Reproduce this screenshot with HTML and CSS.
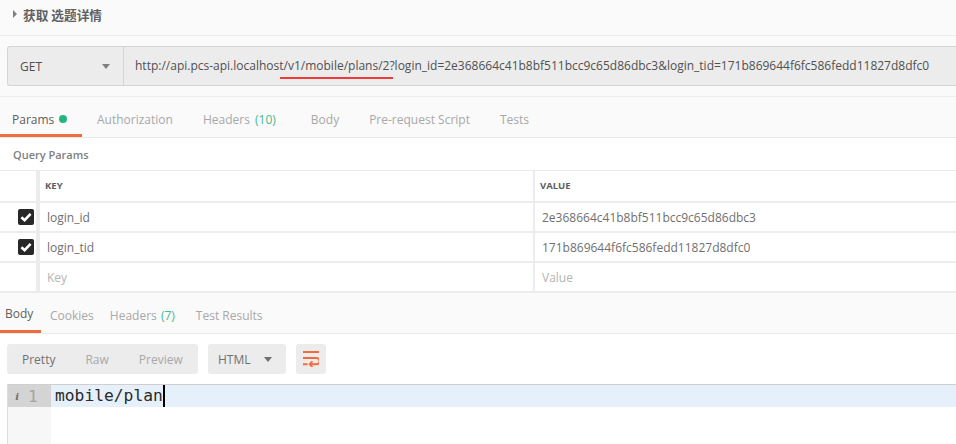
FILE: index.html
```html
<!DOCTYPE html>
<html lang="zh">
<head>
<meta charset="utf-8">
<title>获取选题详情</title>
<link rel="stylesheet" href="styles.css">
</head>
<body>
<header class="title-bar">
  <span class="caret-right"></span>
  <span class="title">获取 选题详情</span>
</header>
<section class="request-bar">
  <div class="request-box">
    <div class="method"><span>GET</span><span class="caret-down"></span></div>
    <div class="url">http://api.pcs-api.localhost/v1/mobile/plans/2?login_id=2e368664c41b8bf511bcc9c65d86dbc3&amp;login_tid=171b869644f6fc586fedd11827d8dfc0</div>
  </div>
  <span class="red-mark"></span>
</section>
<nav class="tabs req-tabs">
  <span class="tab active">Params<i class="dot"></i></span>
  <span class="tab">Authorization</span>
  <span class="tab tab-wide">Headers <em>(10)</em></span>
  <span class="tab">Body</span>
  <span class="tab">Pre-request Script</span>
  <span class="tab">Tests</span>
</nav>
<div class="section-label">Query Params</div>
<div class="grid">
  <div class="row head"><div class="c-check"></div><div class="c-key">KEY</div><div class="c-val">VALUE</div></div>
  <div class="row"><div class="c-check"><span class="check"><svg viewBox="0 0 16 16" width="16" height="16"><path d="M3.4 8.2 6.6 11.2 12.6 4.8" fill="none" stroke="#fff" stroke-width="2.6"/></svg></span></div><div class="c-key">login_id</div><div class="c-val">2e368664c41b8bf511bcc9c65d86dbc3</div></div>
  <div class="row"><div class="c-check"><span class="check"><svg viewBox="0 0 16 16" width="16" height="16"><path d="M3.4 8.2 6.6 11.2 12.6 4.8" fill="none" stroke="#fff" stroke-width="2.6"/></svg></span></div><div class="c-key">login_tid</div><div class="c-val">171b869644f6fc586fedd11827d8dfc0</div></div>
  <div class="row ph"><div class="c-check"></div><div class="c-key">Key</div><div class="c-val">Value</div></div>
</div>
<nav class="tabs res-tabs">
  <span class="tab active">Body</span>
  <span class="tab">Cookies</span>
  <span class="tab">Headers <em>(7)</em></span>
  <span class="tab">Test Results</span>
</nav>
<div class="toolbar">
  <div class="seg"><span class="seg-on">Pretty</span><span>Raw</span><span>Preview</span></div>
  <div class="lang"><span>HTML</span><span class="caret-down dark"></span></div>
  <div class="wrap-btn"><svg viewBox="0 0 16 16" width="16" height="16"><path d="M0 1H16M0 7H13.5a2.7 2.7 0 0 1 0 6.3H7.5M0 13.3H4.5" fill="none" stroke="#f26b3a" stroke-width="2"/><path d="M9.4 10.4 6.6 13.3l2.8 2.7" fill="none" stroke="#f26b3a" stroke-width="1.8"/></svg></div>
</div>
<div class="editor">
  <div class="gutter">
    <div class="gutter-line"><span class="info">i</span><span class="num">1</span></div>
  </div>
  <div class="code"><div class="code-line">mobile/plan<span class="cursor"></span></div></div>
</div>
</body>
</html>
```
FILE: styles.css
```css
* { box-sizing: border-box; }
html, body { margin: 0; padding: 0; height: 444px; overflow: hidden; background: #fff; }
body { font-family: "Open Sans", "Noto Sans CJK SC", sans-serif; font-size: 12px; color: #808080; width: 956px; }
.title-bar { height: 36px; background: #fafafa; border-bottom: 1px solid #eee; display: flex; align-items: center; padding-left: 13px; padding-bottom: 7px; gap: 6px; }
.caret-right { width: 0; height: 0; border-left: 4px solid #808080; border-top: 4px solid transparent; border-bottom: 4px solid transparent; }
.title { font-weight: 700; color: #606060; font-size: 12.7px; font-family: "Noto Sans CJK SC", sans-serif; }
.request-bar { position: relative; height: 61px; background: #fafafa; border-bottom: 1px solid #eee; padding: 10px 0 0 7px; }
.request-box { height: 40px; display: flex; background: #ececec; border: 1px solid #d4d4d4; border-width: 1px 0 1px 1px; border-radius: 3px 0 0 3px; }
.method { width: 116px; flex: none; border-right: 1px solid #d4d4d4; display: flex; align-items: center; justify-content: space-between; padding: 0 13px 0 12px; font-size: 12px; color: #505050; }
.caret-down { width: 0; height: 0; border-top: 5px solid #808080; border-left: 4px solid transparent; border-right: 4px solid transparent; }
.url { flex: 1; padding-left: 11px; line-height: 37px; color: #505050; white-space: nowrap; font-size: 12px; }
.red-mark { position: absolute; left: 280px; top: 41px; width: 113px; height: 2px; background: #f23a3a; }
.tabs { display: flex; background: #fafafa; border-bottom: 1px solid #eaeaea; }
.tab { display: flex; align-items: center; color: #a8a8a8; white-space: pre; }
.tab em { font-style: normal; color: #46b98c; margin-left: 1px; }
.tab.active { color: #606060; border-bottom: 3px solid #f26b3a; }
.req-tabs { height: 41px; }
.req-tabs .tab { padding: 5px 24px 0 0; height: 40px; margin-right: 6px; }
.req-tabs .tab-wide { padding-right: 29px; }
.req-tabs .tab-wide em { margin-left: 2px; }
.req-tabs .tab.active { padding: 7px 12px 0 12px; width: 82px; margin-right: 15px; }
.dot { width: 8px; height: 8px; border-radius: 50%; background: #26b47f; margin-left: 5px; }
.section-label { height: 32px; background: #fff; display: flex; align-items: center; padding-left: 13px; font-weight: 600; font-size: 11px; color: #808080; }
.grid { border-top: 1px solid #eaeaea; }
.row { display: flex; height: 30px; border-bottom: 2px solid #ececec; background: #fff; color: #707070; }
.row.head { height: 32px; font-size: 9.5px; font-weight: 700; color: #606060; }
.head .c-key, .head .c-val { padding-bottom: 2px; }
.c-check { width: 40px; flex: none; display: flex; align-items: center; justify-content: center; padding-left: 16px; border-right: 4px solid #ececec; }
.c-key { width: 495px; flex: none; padding-left: 7px; display: flex; align-items: center; border-right: 2px solid #ececec; }
.head .c-key { padding-left: 5px; }
.c-val { flex: 1; padding-left: 7px; display: flex; align-items: center; }
.head .c-val { padding-left: 5px; }
.ph { color: #b4b4b4; }
.check { width: 16px; height: 16px; background: #282828; border-radius: 2px; display: flex; }
.res-tabs { height: 41px; }
.res-tabs .tab { height: 40px; padding: 4px 16px 0 0; }
.res-tabs .tab.active { width: 41px; padding: 4px 0 0 5px; margin-right: 9px; }
.res-tabs .tab:nth-child(3) { padding-right: 21px; }
.toolbar { display: flex; height: 50px; padding: 10px 0 0 7px; background: #fff; }
.seg, .lang, .wrap-btn { height: 30px; background: #ececec; border-radius: 3px; display: flex; align-items: center; }
.seg { width: 191px; padding-left: 15px; gap: 30px; color: #a8a8a8; margin-right: 10px; }
.seg-on { color: #707070; }
.lang { width: 78px; padding: 0 14px 0 10px; justify-content: space-between; margin-right: 10px; color: #707070; }
.dark { border-top-color: #707070; }
.wrap-btn { width: 30px; justify-content: center; }
.editor { display: flex; height: 60px; border-top: 1px solid #d0d0d0; margin-left: 7px; border-left: 1px solid #ddd; }
.gutter { width: 43px; flex: none; background: #f7f7f7; }
.gutter-line { height: 22px; background: #d4d4d4; display: flex; align-items: center; font-family: "DejaVu Sans Mono", monospace; }
.info { width: 11px; text-align: right; font: italic 700 10px "DejaVu Serif", serif; color: #707070; }
.num { font-size: 16.3px; color: #a4a4a4; padding-left: 9px; }
.code { flex: 1; }
.code-line { height: 22px; background: #e5f0fb; font-family: "DejaVu Sans Mono", monospace; font-size: 16.3px; line-height: 22px; color: #2a2a2a; padding-left: 4px; position: relative; display: flex; }
.cursor { width: 2px; height: 22px; background: #000; }
```
